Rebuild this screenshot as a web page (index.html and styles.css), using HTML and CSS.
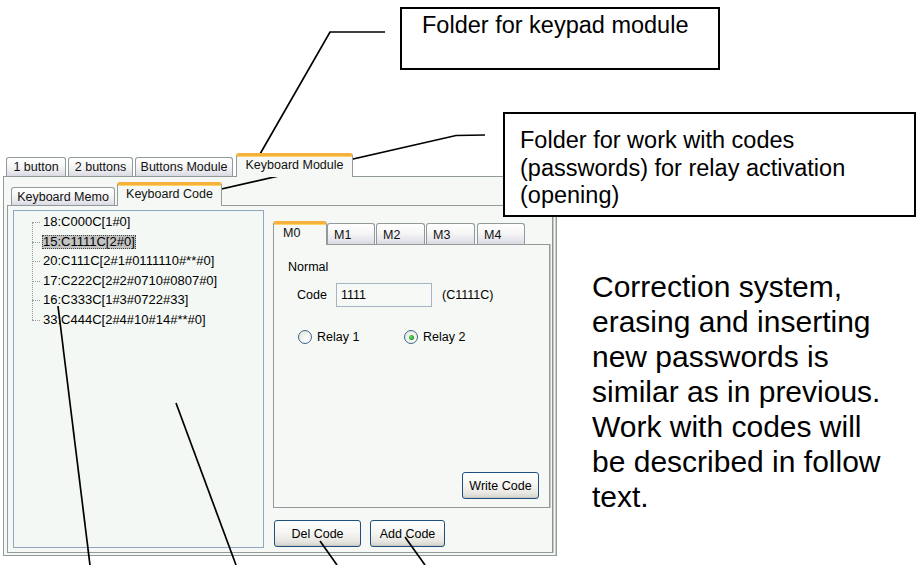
FILE: index.html
```html
<!DOCTYPE html>
<html>
<head>
<meta charset="utf-8">
<link rel="stylesheet" href="styles.css">
</head>
<body>
<div class="page">
  <div class="main">
    <div class="window">
      <div class="tabstrip outer-tabs">
        <div class="tab t1">1 button</div>
        <div class="tab t2">2 buttons</div>
        <div class="tab t3">Buttons Module</div>
        <div class="tab active t4">Keyboard Module</div>
      </div>
      <div class="outer-panel">
        <div class="tabstrip inner-tabs">
          <div class="tab ti1">Keyboard Memo</div>
          <div class="tab active ti2">Keyboard Code</div>
        </div>
        <div class="inner-panel">
          <div class="listbox">
            <ul class="tree">
              <li>18:C000C[1#0]</li>
              <li><span class="sel">15:C1111C[2#0]</span></li>
              <li>20:C111C[2#1#0111110#**#0]</li>
              <li>17:C222C[2#2#0710#0807#0]</li>
              <li>16:C333C[1#3#0722#33]</li>
              <li>33:C444C[2#4#10#14#**#0]</li>
            </ul>
          </div>
          <div class="right-col">
            <div class="tabstrip mtabs">
              <div class="tab active m0">M0</div>
              <div class="tab m1">M1</div>
              <div class="tab m2">M2</div>
              <div class="tab m3">M3</div>
              <div class="tab m4">M4</div>
            </div>
            <div class="m-panel">
              <div class="normal">Normal</div>
              <div class="code-row">
                <span class="code-label">Code</span>
                <div class="input">1111</div>
                <span class="code-val">(C1111C)</span>
              </div>
              <div class="radio-row">
                <div class="radio-item r1"><span class="radio"></span>Relay 1</div>
                <div class="radio-item r2"><span class="radio checked"></span>Relay 2</div>
              </div>
              <div class="btn write">Write Code</div>
            </div>
            <div class="btn-row">
              <div class="btn del">Del Code</div>
              <div class="btn add">Add Code</div>
            </div>
          </div>
        </div>
      </div>
    </div>
    <p class="desc">Correction system,<br>erasing and inserting<br>new passwords is<br>similar as in previous.<br>Work with codes will<br>be described in follow<br>text.</p>
  </div>
  <div class="callout c1">Folder for keypad module</div>
  <div class="callout c2">Folder for work with codes<br>(passwords) for relay activation<br>(opening)</div>
  <svg class="leaders" width="918" height="565" viewBox="0 0 918 565">
    <polyline points="385,32 330,32 252,168" />
    <polyline points="485,135 456,135.5 182,198" />
    <line x1="58" y1="306" x2="90" y2="565" />
    <line x1="176" y1="403" x2="236" y2="565" />
    <line x1="320" y1="541" x2="337" y2="565" />
    <line x1="405" y1="537" x2="425" y2="565" />
  </svg>
</div>
</body>
</html>
```

FILE: styles.css
```css
* { box-sizing: border-box; }
html, body { margin: 0; padding: 0; background: #fff; }
body { font-family: "Liberation Sans", Arial, sans-serif; color: #000; }

.page {
  position: relative;
  width: 918px;
  height: 565px;
  overflow: hidden;
  background: #fff;
}

.main {
  display: flex;
  align-items: flex-start;
  padding: 153px 0 0 3px;
}

/* ---------- window ---------- */
.window {
  width: 554px;
  font-size: 12.5px;
}

.tabstrip {
  display: flex;
  align-items: flex-end;
}

.tab {
  position: relative;
  border: 1px solid #919b9c;
  border-bottom: none;
  border-radius: 3px 3px 0 0;
  background: linear-gradient(180deg, #ffffff 0%, #f6f6f6 45%, #e6e6ec 80%, #d9d9e3 100%);
  display: flex;
  align-items: center;
  justify-content: center;
  white-space: nowrap;
  color: #111;
}

.tab.active {
  background: #f5f8f4;
  border-top: 3px solid #f4b13b;
  box-shadow: inset 0 1px 0 #ffd26a;
  margin-bottom: -1px;
  z-index: 2;
}

.outer-tabs { height: 23px; padding-left: 3px; }
.outer-tabs .tab { height: 19px; }
.outer-tabs .t1 { width: 60px; }
.outer-tabs .t2 { width: 65px; margin-left: 2px; }
.outer-tabs .t3 { width: 98px; margin-left: 2px; }
.outer-tabs .t4 { width: 117px; margin-left: 3px; height: 24px; padding-bottom: 4px; }

.outer-panel {
  width: 554px;
  height: 380px;
  border: 1px solid #919b9c;
  box-shadow: inset -1px 0 0 #d0d0bf;
  background: #f5f8f4;
  padding: 5px 3px 0 3px;
}

.inner-tabs { height: 23px; padding-left: 4px; }
.inner-tabs .ti1 { width: 104px; height: 18px; }
.inner-tabs .ti2 { width: 105px; height: 24px; margin-left: 2px; padding-bottom: 3px; }

.inner-panel {
  height: 348px;
  border: 1px solid #919b9c;
  border-right-color: #8d9596;
  box-shadow: 1px 0 0 #c5c9c0;
  background: #f5f8f4;
  padding: 4px 0 0 5px;
  display: flex;
  gap: 9px;
}

.listbox {
  width: 251px;
  height: 338px;
  border: 1px solid #8fa7c1;
  background: #f4f8f4;
}

.tree {
  position: relative;
  list-style: none;
  margin: 0;
  padding: 1px 0 0 29px;
  font-size: 13px;
  line-height: 19.6px;
}

.tree::before {
  content: "";
  position: absolute;
  left: 18px;
  top: 11px;
  height: 98px;
  border-left: 1px dotted #9a9a9a;
}

.tree li {
  position: relative;
  white-space: nowrap;
}

.tree li::before {
  content: "";
  position: absolute;
  left: -11px;
  top: 10px;
  width: 8px;
  border-top: 1px dotted #9a9a9a;
}

.sel {
  display: inline-block;
  line-height: 14px;
  margin-left: -1px;
  padding: 0 1px;
  background: #c3c3c3;
  outline: 1px dotted #444;
  outline-offset: -1px;
}

/* ---------- right column ---------- */
.right-col {
  width: 277px;
  padding-top: 10px;
}

.mtabs { height: 24px; }
.mtabs .tab {
  height: 21px;
  justify-content: flex-start;
  padding-left: 6px;
  padding-top: 1px;
}
.mtabs .m0 { width: 54px; height: 24px; padding-left: 9px; padding-bottom: 5px; }
.mtabs .m1 { width: 48px; }
.mtabs .m2 { width: 49px; margin-left: 1px; }
.mtabs .m3 { width: 49px; margin-left: 1px; }
.mtabs .m4 { width: 48px; margin-left: 2px; }

.m-panel {
  height: 264px;
  border: 1px solid #919b9c;
  box-shadow: 1px 0 0 #c5c9c0;
  background: #f5f8f4;
  padding: 14px 10px 8px 14px;
  display: flex;
  flex-direction: column;
}

.normal { line-height: 16px; }

.code-row {
  display: flex;
  align-items: center;
  margin-top: 8px;
  padding-left: 9px;
}
.code-label { width: 39px; }
.input {
  width: 96px;
  height: 24px;
  border: 1px solid #a5b3c2;
  background: #f6f9f5;
  padding: 2px 0 0 4px;
  line-height: 18px;
}
.code-val { margin-left: 10px; }

.radio-row {
  display: flex;
  margin-top: 23px;
  padding-left: 10px;
  line-height: 14px;
}
.radio-item {
  display: flex;
  align-items: center;
}
.r1 { width: 106px; }
.radio {
  width: 14px;
  height: 14px;
  border-radius: 50%;
  border: 1px solid #3e6891;
  background: radial-gradient(circle at 60% 65%, #ffffff 0%, #eef0ea 55%, #d8d9d0 100%);
  margin-right: 5px;
  position: relative;
}
.radio.checked::after {
  content: "";
  position: absolute;
  left: 3.5px;
  top: 3.5px;
  width: 5px;
  height: 5px;
  border-radius: 50%;
  background: radial-gradient(circle at 40% 40%, #7fe37f 0%, #21a121 60%, #0f7a0f 100%);
}

.btn {
  border: 1px solid #1f4f80;
  border-radius: 3px;
  background: linear-gradient(180deg, #ffffff 0%, #f6f6f3 45%, #e8e7e2 80%, #d3d2cd 100%);
  box-shadow: inset 0 -1px 0 #c9c8c2;
  display: flex;
  align-items: center;
  justify-content: center;
  height: 27px;
  white-space: nowrap;
}

.write {
  margin-top: auto;
  align-self: flex-end;
  width: 77px;
}

.btn-row {
  display: flex;
  margin-top: 12px;
  padding-left: 1px;
}
.del { width: 87px; }
.add { width: 75px; margin-left: 9px; }

/* ---------- description ---------- */
.desc {
  margin: 116px 0 0 35px;
  font-size: 30px;
  line-height: 35px;
  white-space: nowrap;
}

/* ---------- callouts ---------- */
.callout {
  position: absolute;
  border: 2px solid #000;
  background: #fff;
  font-size: 23.5px;
  white-space: nowrap;
}
.c1 {
  left: 400px;
  top: 7px;
  width: 320px;
  height: 63px;
  padding: 3px 0 0 20px;
  line-height: 27px;
}
.c2 {
  left: 503px;
  top: 112px;
  width: 413px;
  height: 105px;
  padding: 13px 0 0 15px;
  line-height: 27.5px;
}

.leaders {
  position: absolute;
  left: 0;
  top: 0;
  pointer-events: none;
}
.leaders polyline, .leaders line {
  fill: none;
  stroke: #000;
  stroke-width: 1.7;
}
```
